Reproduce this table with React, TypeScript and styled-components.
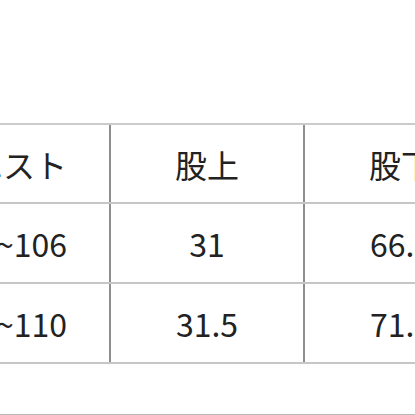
import styled, { createGlobalStyle } from "styled-components";

const GlobalStyle = createGlobalStyle`
  html, body {
    margin: 0;
    padding: 0;
    background: #ffffff;
  }
  body {
    font-family: "Noto Sans CJK JP", "Noto Sans", sans-serif;
    color: #222222;
  }
`;

const Page = styled.div`
  width: 415px;
  height: 415px;
  overflow: hidden;
  padding-top: 123px;
  box-sizing: border-box;
  background: #ffffff;
`;

const Table = styled.div`
  margin-left: -83px;
  width: 600px;
  border-top: 2px solid #cbcbcb;
`;

const Row = styled.div<{ $height: number }>`
  display: flex;
  height: ${({ $height }) => $height}px;
  border-bottom: 2px solid #c6c6c6;
`;

const Cell = styled.div<{ $last?: boolean; $first?: boolean }>`
  flex: none;
  width: 192px;
  box-sizing: content-box;
  display: flex;
  align-items: center;
  justify-content: ${({ $first }) => ($first ? "flex-end" : "center")};
  padding-right: ${({ $first }) => ($first ? "42px" : "0")};
  font-size: 32px;
  line-height: 1;
  white-space: nowrap;
  border-right: ${({ $last }) => ($last ? "none" : "2px solid #8e8e8e")};
`;

const FirstCell = styled(Cell)`
  width: 150px;
`;

const Divider = styled.div`
  margin-top: 50px;
  height: 2px;
  background: #b8b8b8;
`;

const rows = [
  { height: 77, cells: ["ウエスト", "股上", "股下"] },
  { height: 78, cells: ["~106", "31", "66.5"] },
  { height: 78, cells: ["~110", "31.5", "71.5"] },
];

export default function App() {
  return (
    <>
      <GlobalStyle />
      <Page>
        <Table>
          {rows.map((row, i) => (
            <Row key={i} $height={row.height}>
              {row.cells.map((c, j) =>
                j === 0 ? (
                  <FirstCell key={j} $first>
                    {c}
                  </FirstCell>
                ) : (
                  <Cell key={j} $last={j === row.cells.length - 1}>
                    {c}
                  </Cell>
                )
              )}
            </Row>
          ))}
        </Table>
        <Divider />
      </Page>
    </>
  );
}
